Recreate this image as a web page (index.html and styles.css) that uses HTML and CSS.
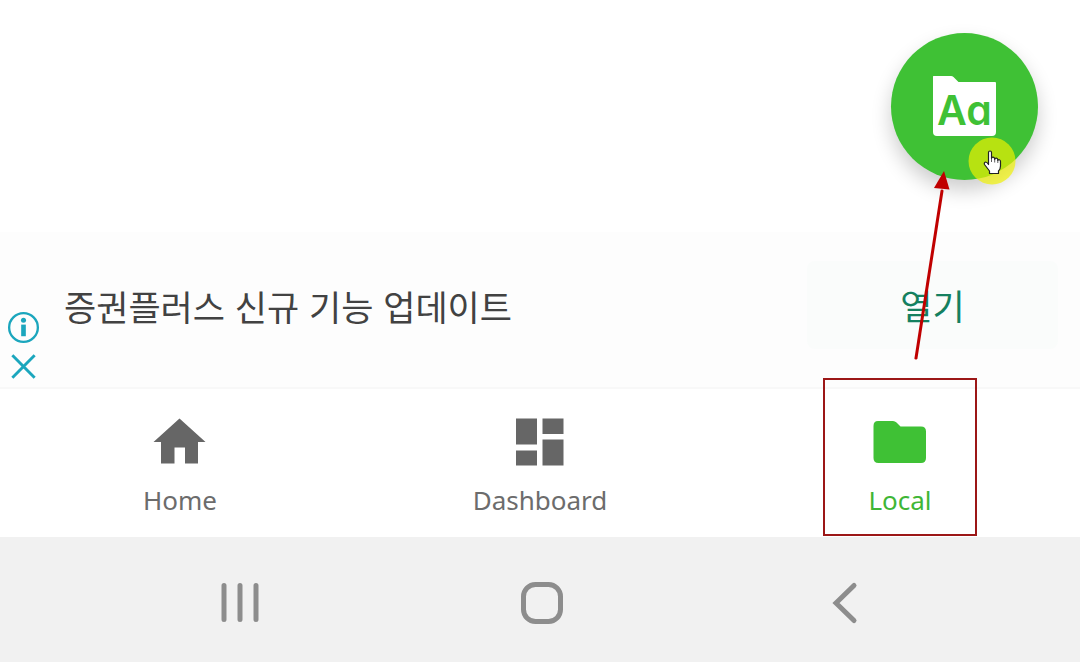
FILE: index.html
```html
<!DOCTYPE html>
<html lang="ko">
<head>
<meta charset="utf-8">
<meta name="viewport" content="width=device-width, initial-scale=1">
<title>Local</title>
<link rel="stylesheet" href="styles.css">
</head>
<body>
<div class="screen">
  <main class="content">
    <button class="fab" type="button" aria-label="Aa">
      <svg class="fab-folder" viewBox="0 0 64 62" aria-hidden="true"><path d="M.5 0H18Q19.500 0 20.500 1L25.500 6H62Q63 6 63 7V56Q63 60 59 60H4Q0 60 0 56V.5Q0 0 .5 0Z"/></svg>
      <span class="fab-text">Aa</span>
    </button>
    <svg class="pointer" viewBox="0 0 48 48" aria-hidden="true">
      <circle cx="24" cy="24" r="23.500" fill="#f0f200" fill-opacity=".68"/>
      <path d="M20.500 15.500Q20.500 14 22 14T23.500 15.500V21.500Q23.800 20 25.200 20.200T26.700 22V22.500Q27 21 28.400 21.200T29.800 23V23.500Q30.200 22.300 31.400 22.700T32.500 24.500V29Q32.500 32 30.500 34V36.500H21.500V34L16.500 27.500Q15.800 25.500 17.500 25Q19 25 20.500 27.500Z" fill="#fff" stroke="#222" stroke-width="1.200" stroke-linejoin="round"/>
      <path d="M23.500 21V25M26.700 22V25.500M29.800 23V26" fill="none" stroke="#333" stroke-width=".8"/>
    </svg>
  </main>

  <section class="ad">
    <div class="ad-controls">
      <button class="ad-icon" type="button" aria-label="Info">
        <svg viewBox="0 0 34 34"><circle cx="17" cy="17" r="14.800" fill="none" stroke="#1ba6bd" stroke-width="2.400"/><circle cx="17" cy="9.500" r="2.600"/><path d="M14.600 14H19.400V26H14.600Z"/></svg>
      </button>
      <button class="ad-icon" type="button" aria-label="Close">
        <svg viewBox="0 0 34 34"><path d="M5.500 5.500L28.500 28.500M28.500 5.500L5.500 28.500" fill="none" stroke="#1ba6bd" stroke-width="3"/></svg>
      </button>
    </div>
    <p class="ad-title">증권플러스 신규 기능 업데이트</p>
    <button class="ad-open" type="button">열기</button>
  </section>

  <nav class="tabs">
    <a class="tab" href="#home">
      <svg class="tab-icon" viewBox="0 0 60 56" aria-hidden="true"><path d="M29.500 4.500L55.500 28H48V49.500H35V33.500H24.500V49.500H11V28H3.500Z"/></svg>
      <span>Home</span>
    </a>
    <a class="tab" href="#dashboard">
      <svg class="tab-icon" viewBox="0 0 60 56" aria-hidden="true"><path d="M6 4.500H27V30.500H6ZM32.500 4.500H53.500V20H32.500ZM6 36.500H27V51.500H6ZM32.500 25.500H53.500V51.500H32.500Z"/></svg>
      <span>Dashboard</span>
    </a>
    <a class="tab tab-active" href="#local" aria-current="page">
      <svg class="tab-icon" viewBox="0 0 60 56" aria-hidden="true"><path d="M8 7H23Q25 7 26.500 8.500L30.500 12.500H51Q56 12.500 56 17.500V44Q56 49 51 49H8.500Q3.500 49 3.500 44V12Q3.500 7 8 7Z"/></svg>
      <span>Local</span>
    </a>
  </nav>

  <footer class="system">
    <button class="system-key" type="button" aria-label="Recents"><svg viewBox="0 0 48 48"><path d="M8 6.500V40.500M24 6.500V40.500M40 6.500V40.500" stroke-width="5"/></svg></button>
    <button class="system-key" type="button" aria-label="Home screen"><svg viewBox="0 0 48 48"><rect x="5.500" y="5.500" width="37" height="37" rx="12" stroke-width="5"/></svg></button>
    <button class="system-key" type="button" aria-label="Back"><svg viewBox="0 0 48 48"><path d="M34 6.500L16 24L34 41.500" stroke-width="5"/></svg></button>
  </footer>

  <svg class="arrow" viewBox="0 0 48 192" aria-hidden="true"><path d="M12 187L38 20" stroke="#c00000" stroke-width="3" stroke-linecap="round"/><path d="M40 0L45.500 18.500L30 17Z" fill="#c00000"/></svg>
</div>
</body>
</html>
```
FILE: styles.css
```css
*,
*::after {
  box-sizing: border-box;
}

body {
  margin: 0;
  background: #fff;
  font-family: "Noto Sans", "Noto Sans CJK KR", sans-serif;
}

button {
  padding: 0;
  border: 0;
  background: none;
  font: inherit;
}

svg {
  display: block;
}

.screen {
  position: relative;
  display: flex;
  flex-direction: column;
  min-height: 100vh;
}

.content {
  position: relative;
  flex: 1;
  min-height: 220px;
}

.fab {
  position: absolute;
  top: 33px;
  right: 42px;
  display: grid;
  place-items: center;
  width: 147px;
  height: 147px;
  border-radius: 50%;
  background: #3fc135;
  box-shadow: 0 10px 20px rgba(0, 0, 0, 0.2);
}

.fab-folder,
.fab-text {
  grid-area: 1 / 1;
}

.fab-folder {
  width: 64px;
  fill: #fff;
}

.fab-text {
  padding-top: 6px;
  color: #3fc135;
  font-family: Inter, sans-serif;
  font-size: 41px;
  font-weight: 600;
  line-height: 48px;
  font-feature-settings: "cv11";
}

.pointer {
  position: absolute;
  top: 137px;
  right: 64px;
  width: 48px;
}

.ad {
  display: flex;
  align-items: center;
  height: 157px;
  padding-right: 22px;
  background: #fdfdfd;
  border-bottom: 2px solid #f8f8f8;
}

.ad-controls {
  display: flex;
  flex-direction: column;
  align-self: flex-end;
  gap: 6px;
  padding: 0 24px 4px 7px;
}

.ad-icon svg {
  width: 33px;
  fill: #1ba6bd;
}

.ad-title {
  flex: 1;
  margin: 0;
  padding-bottom: 8px;
  color: #424242;
  font-family: "Noto Sans CJK KR", sans-serif;
  font-size: 35px;
  line-height: 48px;
}

.ad-open {
  width: 251px;
  height: 88px;
  margin-bottom: 10px;
  border-radius: 8px;
  background: #fafcfb;
  color: #15805f;
  font-family: "Noto Sans CJK KR", sans-serif;
  font-size: 35px;
}

.tabs {
  display: grid;
  grid-template-columns: repeat(3, 1fr);
}

.tab {
  position: relative;
  display: flex;
  flex-direction: column;
  align-items: center;
  gap: 12px;
  padding: 25px 0 19px;
  color: #6c6c6c;
  font-size: 26px;
  line-height: 36px;
  text-decoration: none;
}

.tab-icon {
  width: 60px;
  fill: #666;
}

.tab-active {
  color: #3fb636;
}

.tab-active .tab-icon {
  fill: #3fc135;
}

.tab-active::after {
  content: "";
  position: absolute;
  top: -11px;
  bottom: 1px;
  left: 50%;
  width: 154px;
  margin-left: -77px;
  border: 2px solid #9c1717;
}

.system {
  display: grid;
  grid-template-columns: repeat(3, 1fr);
  justify-items: center;
  padding: 42px 85px 35px 89px;
  background: #f1f1f1;
}

.system-key svg {
  width: 48px;
  fill: none;
  stroke: #8d8d8d;
  stroke-linecap: round;
}

.arrow {
  position: absolute;
  top: 171px;
  right: 128px;
  width: 48px;
  fill: none;
}
```
